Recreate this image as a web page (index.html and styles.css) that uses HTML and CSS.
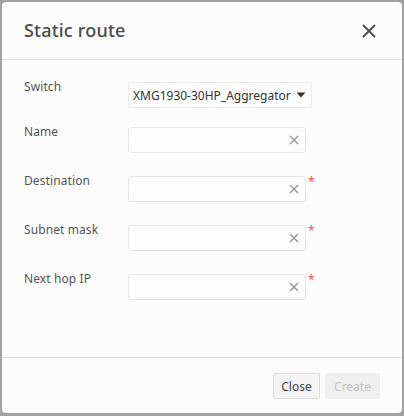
FILE: index.html
```html
<!DOCTYPE html>
<html>
<head>
<meta charset="utf-8">
<link rel="stylesheet" href="styles.css">
</head>
<body>
<div class="dialog">
  <div class="header">
    <div class="title">Static route</div>
    <svg class="close-icon" width="14" height="14" viewBox="0 0 14 14"><path d="M1.5 1.5L12.5 12.5M12.5 1.5L1.5 12.5" stroke="#4a4a4a" stroke-width="1.8" stroke-linecap="round"/></svg>
  </div>
  <div class="body">
    <div class="row row-first">
      <div class="label">Switch</div>
      <div class="select">
        <span class="select-text">XMG1930-30HP_Aggregator</span>
        <svg class="caret" width="10" height="6" viewBox="0 0 10 6"><path d="M0.5 0.5H9.5L5 5.5Z" fill="#333"/></svg>
      </div>
    </div>
    <div class="row">
      <div class="label">Name</div>
      <div class="input"><svg class="clear" width="10" height="10" viewBox="0 0 10 10"><path d="M1 1L9 9M9 1L1 9" stroke="#9a9a9a" stroke-width="1.5"/></svg></div>
    </div>
    <div class="row">
      <div class="label">Destination</div>
      <div class="input"><svg class="clear" width="10" height="10" viewBox="0 0 10 10"><path d="M1 1L9 9M9 1L1 9" stroke="#9a9a9a" stroke-width="1.5"/></svg></div>
      <span class="req">*</span>
    </div>
    <div class="row">
      <div class="label">Subnet mask</div>
      <div class="input"><svg class="clear" width="10" height="10" viewBox="0 0 10 10"><path d="M1 1L9 9M9 1L1 9" stroke="#9a9a9a" stroke-width="1.5"/></svg></div>
      <span class="req">*</span>
    </div>
    <div class="row">
      <div class="label">Next hop IP</div>
      <div class="input"><svg class="clear" width="10" height="10" viewBox="0 0 10 10"><path d="M1 1L9 9M9 1L1 9" stroke="#9a9a9a" stroke-width="1.5"/></svg></div>
      <span class="req">*</span>
    </div>
  </div>
  <div class="footer">
    <button class="btn btn-close">Close</button>
    <button class="btn btn-create">Create</button>
  </div>
</div>
</body>
</html>
```
FILE: styles.css
```css
html, body {
  margin: 0;
  padding: 0;
}
body {
  background: #a2a2a2;
  width: 404px;
  height: 416px;
  font-family: "Noto Sans", "Open Sans", sans-serif;
  padding: 2px 2px 0 2px;
  box-sizing: border-box;
}
.dialog {
  width: 400px;
  height: 411px;
  background: #fcfcfc;
  border-radius: 4px;
  display: flex;
  flex-direction: column;
  overflow: hidden;
}
.header {
  height: 57px;
  border-bottom: 1px solid #e4e4e4;
  display: flex;
  align-items: center;
  justify-content: space-between;
  padding: 0 26px 0 22px;
  flex-shrink: 0;
}
.title {
  font-size: 18px;
  font-weight: 500;
  color: #4a4a4a;
  padding-bottom: 1px;
  letter-spacing: 0.2px;
}
.close-icon {
  display: block;
}
.body {
  flex: 1;
  padding: 0 0 0 22px;
}
.row {
  display: flex;
  align-items: flex-start;
  margin-top: 19px;
  height: 26px;
}
.row-first {
  margin-top: 22px;
}
.row + .row {
  margin-top: 23px;
}
.row:nth-child(2) {
  margin-top: 19px;
}
.label {
  width: 104px;
  font-size: 12px;
  color: #555;
  line-height: 14px;
  margin-top: -2px;
  letter-spacing: 0.1px;
}
.select {
  width: 184px;
  height: 26px;
  box-sizing: border-box;
  border: 1px solid #ececec;
  border-radius: 3px;
  background: #fdfdfd;
  display: flex;
  align-items: center;
  padding: 0 5px 0 4px;
  justify-content: space-between;
}
.select-text {
  font-size: 12px;
  color: #333;
  white-space: nowrap;
}
.caret {
  display: block;
}
.input {
  width: 178px;
  height: 26px;
  box-sizing: border-box;
  border: 1px solid #e6e6e6;
  border-radius: 3px;
  background: #fdfdfd;
  display: flex;
  align-items: center;
  justify-content: flex-end;
  padding-right: 6px;
}
.clear {
  display: block;
}
.req {
  color: #ff4d4f;
  font-size: 12px;
  line-height: 12px;
  margin-left: 2px;
  margin-top: 0;
}
.footer {
  height: 56px;
  border-top: 1px solid #e4e4e4;
  display: flex;
  justify-content: flex-end;
  align-items: flex-start;
  padding: 15px 22px 0 0;
  box-sizing: border-box;
  gap: 5px;
  flex-shrink: 0;
}
.btn {
  height: 26px;
  font-family: inherit;
  font-size: 12px;
  border-radius: 2px;
  padding: 0;
  margin: 0;
}
.btn-close {
  width: 47px;
  background: #f4f4f4;
  border: 1px solid #dcdcdc;
  color: #444;
}
.btn-create {
  width: 55px;
  background: #efefef;
  border: 1px solid #efefef;
  color: #c4c4c4;
}
```
